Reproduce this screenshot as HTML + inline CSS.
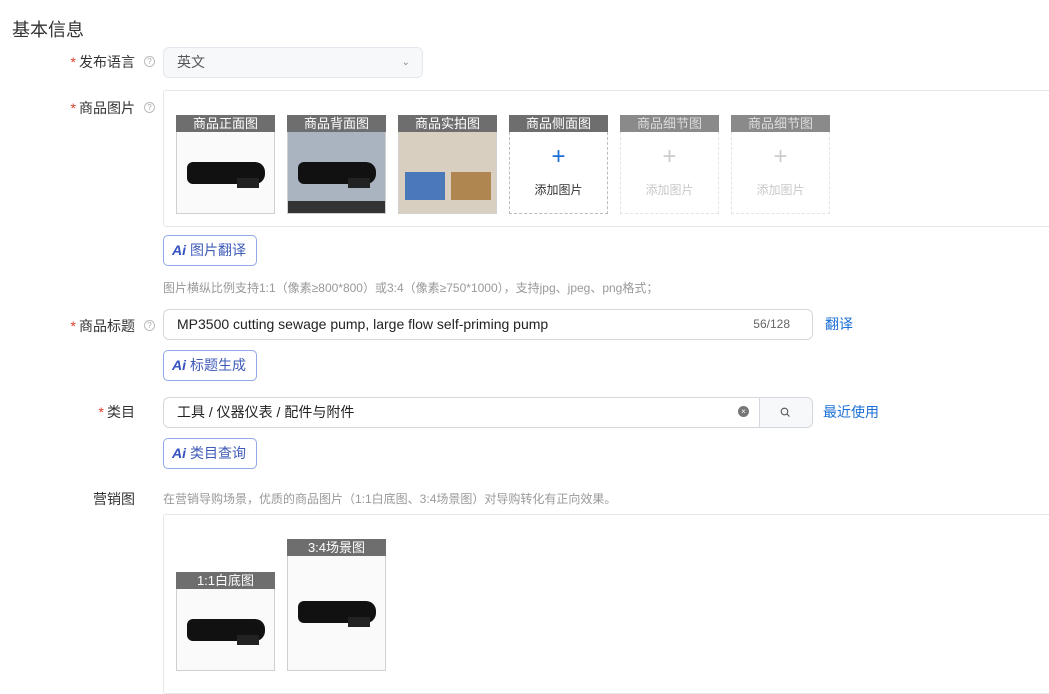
<!DOCTYPE html>
<html><head><meta charset="utf-8"><style>
*{box-sizing:border-box;margin:0;padding:0}
body{width:1049px;height:679px;overflow:hidden;background:#fff;font-family:"Liberation Sans","Noto Sans CJK SC",sans-serif;color:#333;position:relative;font-size:14px}
.a{position:absolute}
.lbl{position:absolute;right:914px;font-size:14px;color:#333;white-space:nowrap}
.lbl b{color:#e03c2c;font-weight:normal;margin-right:3px}
.q{position:absolute;left:144px;width:11px;height:11px;border:1px solid #bbb;border-radius:50%;font-size:8px;color:#aaa;text-align:center;line-height:9px}
.inp{position:absolute;border:1px solid #d4d7de;border-radius:6px;background:#fff;font-size:14px;color:#222;padding-left:13px}
.ai{position:absolute;left:163px;width:94px;height:31px;border:1px solid #93a8e6;border-radius:5px;color:#3f5bb8;font-size:14px;line-height:29px;padding-left:8px}
.ai i{font-style:italic;font-weight:bold;color:#3452c0;margin-right:4px;font-size:14px}
.slot{position:absolute;width:99px;height:99px}
.hd{height:17px;background:#6e6e6e;color:#fff;font-size:13px;text-align:center;line-height:17px}
.img{height:82px;border:1px solid #d0d0d0;border-top:none;background:#fafafa;position:relative;overflow:hidden}
.pump{position:absolute;left:10px;top:30px;width:78px;height:22px;background:#111;border-radius:6px 10px 10px 6px}
.pump:after{content:"";position:absolute;left:50px;top:16px;width:22px;height:10px;background:#222}
.add{height:82px;border:1px dashed #bbb;border-top:none;text-align:center}
.add .p{font-size:24px;color:#1a6fd6;line-height:24px;padding-top:13px}
.add .t{font-size:12px;color:#333;margin-top:12px}
.dis .hd{background:#8a8a8a;color:#ddd}
.dis .add{border-color:#e4e4e4}
.dis .add .p{color:#ccc}.dis .add .t{color:#c8c8c8}
.hint{position:absolute;left:163px;font-size:12px;color:#999;white-space:nowrap}
.blue{position:absolute;color:#1a6fd6;font-size:14px}
</style></head><body>
<div class="a" style="left:12px;top:16px;font-size:18px;color:#333">基本信息</div>

<div class="lbl" style="top:52px"><b>*</b>发布语言</div><div class="q" style="top:56px">?</div>
<div class="inp" style="left:163px;top:47px;width:260px;height:31px;background:#f7f8fa;border-color:#e4e7ed;line-height:29px;color:#555">英文<span class="a" style="right:12px;top:0;font-size:10px;color:#888">⌄</span></div>

<div class="lbl" style="top:98px"><b>*</b>商品图片</div><div class="q" style="top:102px">?</div>
<div class="a" style="left:163px;top:90px;width:900px;height:137px;border:1px solid #e4e7ed;border-radius:3px"></div>
<div class="slot" style="left:176px;top:115px"><div class="hd">商品正面图</div><div class="img"><div class="pump"></div></div></div>
<div class="slot" style="left:287px;top:115px"><div class="hd">商品背面图</div><div class="img" style="background:#a9b4c0"><div class="pump"></div><div class="a" style="left:0;bottom:0;width:99px;height:12px;background:#333"></div></div></div>
<div class="slot" style="left:398px;top:115px"><div class="hd">商品实拍图</div><div class="img" style="background:#d8cfc0"><div class="a" style="left:6px;top:40px;width:40px;height:28px;background:#4a78b8"></div><div class="a" style="left:52px;top:40px;width:40px;height:28px;background:#b08650"></div></div></div>
<div class="slot" style="left:509px;top:115px"><div class="hd">商品侧面图</div><div class="add"><div class="p">+</div><div class="t">添加图片</div></div></div>
<div class="slot dis" style="left:620px;top:115px"><div class="hd">商品细节图</div><div class="add"><div class="p">+</div><div class="t">添加图片</div></div></div>
<div class="slot dis" style="left:731px;top:115px"><div class="hd">商品细节图</div><div class="add"><div class="p">+</div><div class="t">添加图片</div></div></div>

<div class="ai" style="top:235px"><i>Ai</i>图片翻译</div>
<div class="hint" style="top:279px">图片横纵比例支持1:1（像素≥800*800）或3:4（像素≥750*1000），支持jpg、jpeg、png格式；</div>

<div class="lbl" style="top:316px"><b>*</b>商品标题</div><div class="q" style="top:320px">?</div>
<div class="inp" style="left:163px;top:309px;width:650px;height:31px;line-height:29px">MP3500 cutting sewage pump, large flow self-priming pump<span class="a" style="right:22px;top:0;font-size:12px;color:#666">56/128</span></div>
<div class="blue" style="left:825px;top:314px">翻译</div>
<div class="ai" style="top:350px"><i>Ai</i>标题生成</div>

<div class="lbl" style="top:402px"><b>*</b>类目</div>
<div class="inp" style="left:163px;top:397px;width:597px;height:31px;line-height:29px;border-radius:6px 0 0 6px">工具 / 仪器仪表 / 配件与附件
<span class="a" style="left:574px;top:8px;width:11px;height:11px;border-radius:50%;background:#777;color:#fff;font-size:8px;line-height:11px;text-align:center">×</span></div>
<div class="a" style="left:759px;top:397px;width:54px;height:31px;border:1px solid #d4d7de;background:#f7f8fa;border-radius:0 6px 6px 0">
<svg class="a" style="left:20px;top:9px" width="11" height="11" viewBox="0 0 11 11"><circle cx="4.5" cy="4.5" r="3.3" fill="none" stroke="#555" stroke-width="1.1"/><path d="M7 7L9.5 9.5" stroke="#555" stroke-width="1.1"/></svg></div>
<div class="blue" style="left:823px;top:402px">最近使用</div>
<div class="ai" style="top:438px"><i>Ai</i>类目查询</div>

<div class="lbl" style="top:489px">营销图</div>
<div class="hint" style="top:490px">在营销导购场景，优质的商品图片（1:1白底图、3:4场景图）对导购转化有正向效果。</div>
<div class="a" style="left:163px;top:514px;width:900px;height:180px;border:1px solid #e4e7ed;border-radius:3px"></div>
<div class="slot" style="left:176px;top:572px"><div class="hd">1:1白底图</div><div class="img"><div class="pump"></div></div></div>
<div class="slot" style="left:287px;top:539px;height:132px"><div class="hd">3:4场景图</div><div class="img" style="height:115px"><div class="pump" style="top:45px"></div></div></div>
</body></html>
